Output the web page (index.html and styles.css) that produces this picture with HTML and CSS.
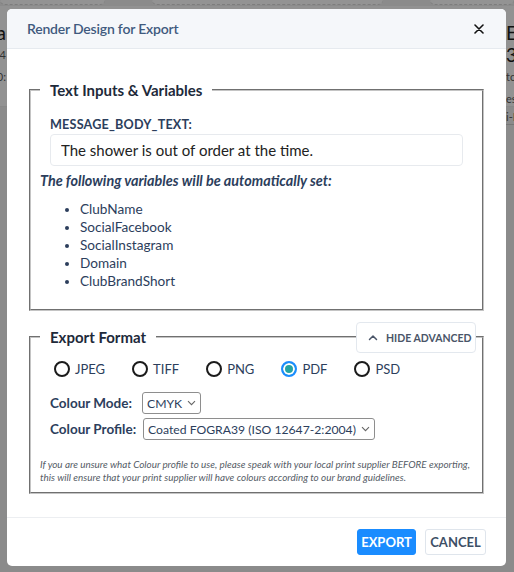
FILE: index.html
```html
<!DOCTYPE html>
<html lang="en">
<head>
<meta charset="utf-8">
<title>Render Design for Export</title>
<link rel="stylesheet" href="styles.css">
</head>
<body>
<div class="page">
  <div class="bg-top">
    <span class="pill p1"></span><span class="pill p2"></span><span class="pill p3"></span>
  </div>
  <div class="bg-cols">
    <div class="bg-col left">
      <div class="bg-title">a</div>
      <div class="bg-line">4</div>
      <div class="bg-line">0:</div>
    </div>
    <div class="bg-col right">
      <div class="bg-title">E</div>
      <div class="bg-sub">3</div>
      <div class="bg-line">to</div>
      <div class="bg-line">es</div>
      <div class="bg-line ruled">i-I</div>
    </div>
  </div>
</div>

<div class="backdrop">
  <div class="modal">
    <div class="modal-header">
      <h1 class="modal-title">Render Design for Export</h1>
      <button class="close" aria-label="Close">
        <svg width="10" height="10" viewBox="0 0 10 10"><path d="M1 1L9 9M9 1L1 9" stroke="#111" stroke-width="1.6" stroke-linecap="round"/></svg>
      </button>
    </div>
    <div class="modal-body">
      <fieldset class="group">
        <legend>Text Inputs &amp; Variables</legend>
        <div class="indent">
          <label class="field-label" for="msg">MESSAGE_BODY_TEXT:</label>
          <input id="msg" class="text-input" type="text" value="The shower is out of order at the time.">
        </div>
        <p class="note-strong">The following variables will be automatically set:</p>
        <ul class="vars">
          <li>ClubName</li>
          <li>SocialFacebook</li>
          <li>SocialInstagram</li>
          <li>Domain</li>
          <li>ClubBrandShort</li>
        </ul>
      </fieldset>

      <fieldset class="group export">
        <legend>Export Format</legend>
        <button class="toggle-adv">
          <svg width="10" height="7" viewBox="0 0 10 7"><path d="M1.5 5.5L5 2L8.5 5.5" fill="none" stroke="#4a5568" stroke-width="1.5" stroke-linecap="round" stroke-linejoin="round"/></svg>
          <span>HIDE ADVANCED</span>
        </button>
        <div class="formats">
          <label class="radio"><input type="radio" name="fmt"><span>JPEG</span></label>
          <label class="radio"><input type="radio" name="fmt"><span>TIFF</span></label>
          <label class="radio"><input type="radio" name="fmt"><span>PNG</span></label>
          <label class="radio"><input type="radio" name="fmt" checked><span>PDF</span></label>
          <label class="radio"><input type="radio" name="fmt"><span>PSD</span></label>
        </div>
        <div class="opt-row first">
          <span class="opt-label">Colour Mode:</span>
          <span class="select">CMYK<svg width="9" height="6" viewBox="0 0 9 6"><path d="M1 1.2L4.5 4.7L8 1.2" fill="none" stroke="#666" stroke-width="1.1"/></svg></span>
        </div>
        <div class="opt-row second">
          <span class="opt-label">Colour Profile:</span>
          <span class="select">Coated FOGRA39 (ISO 12647-2:2004)<svg width="9" height="6" viewBox="0 0 9 6"><path d="M1 1.2L4.5 4.7L8 1.2" fill="none" stroke="#666" stroke-width="1.1"/></svg></span>
        </div>
        <p class="footnote">If you are unsure what Colour profile to use, please speak with your local print supplier BEFORE exporting, this will ensure that your print supplier will have colours according to our brand guidelines.</p>
      </fieldset>
    </div>
    <div class="modal-footer">
      <button class="btn primary">EXPORT</button>
      <button class="btn secondary">CANCEL</button>
    </div>
  </div>
</div>
</body>
</html>
```

FILE: styles.css
```css
* { box-sizing: border-box; }

html, body {
  margin: 0;
  height: 100%;
}

body {
  background: #8b8b8b;
  font-family: Lato, "Liberation Sans", sans-serif;
  overflow: hidden;
}

/* background page (dimmed) */
.page {
  height: 100%;
  overflow: hidden;
}
.bg-top {
  display: flex;
  gap: 47px;
  height: 6px;
}
.pill {
  display: block;
  height: 5px;
  background: #939393;
  border-radius: 0 0 6px 6px;
  border-bottom: 1px dashed #7d7d7d;
}
.p1 { width: 105px; }
.p2 { width: 231px; }
.p3 { width: 84px; }

.bg-cols {
  display: flex;
  justify-content: space-between;
  height: 101px;
  background: #929292;
  border-bottom: 1px solid #888;
}
.bg-col { width: 40px; color: #222; font-size: 11px; }
.bg-col.left { margin-left: -34px; text-align: right; }
.bg-col.right { margin-right: -32px; }
.bg-title { font-size: 19px; line-height: 22px; margin-top: 16px; color: #111; }
.bg-sub { font-size: 19px; line-height: 22px; color: #111; }
.bg-line { line-height: 22px; color: #333; }
.bg-col.left .bg-line:first-of-type { margin-top: 17px; }
.bg-line.ruled { border-bottom: 1px solid #777; line-height: 14px; }

/* modal */
.backdrop {
  position: fixed;
  inset: 0;
  padding: 9px 8px 6px 7px;
  display: flex;
}
.modal {
  width: 499px;
  height: 557px;
  background: #fff;
  border-radius: 5px;
  display: flex;
  flex-direction: column;
  overflow: hidden;
}
.modal-header {
  height: 40px;
  flex: none;
  background: #f5f7fa;
  border-bottom: 1px solid #e6eaef;
  display: flex;
  align-items: center;
  justify-content: space-between;
  padding: 0 22px 0 20px;
}
.modal-title {
  margin: 0;
  font-size: 14px;
  font-weight: 600;
  letter-spacing: -0.2px;
  color: #3f5a7e;
}
.close {
  background: none;
  border: 0;
  padding: 0;
  width: 10px;
  height: 10px;
  display: flex;
  cursor: pointer;
}

.modal-body {
  flex: 1;
  padding: 31px 22px 0;
  display: flex;
  flex-direction: column;
  gap: 16px;
}

.group {
  margin: 0;
  padding: 0 10px;
  border: 2px groove #c4c4c4;
  position: relative;
  min-width: 0;
}
.group legend {
  padding: 0 10px;
  margin-left: -1px;
  font-size: 15px;
  font-weight: 700;
  line-height: 20px;
  color: #1e2a3a;
}
.indent { padding: 0 9px; }

.field-label {
  display: block;
  margin-top: 16px;
  font-size: 12.6px;
  letter-spacing: 0.2px;
  line-height: 18px;
  font-weight: 700;
  color: #2c3e5c;
}
.text-input {
  display: block;
  width: 100%;
  height: 32px;
  margin: 0;
  border: 1px solid #e7eaee;
  border-radius: 4px;
  padding: 0 10px;
  font: 15px Lato, "Liberation Sans", sans-serif;
  color: #222;
  background: #fff;
}
.note-strong {
  margin: 6px 0 0 -1px;
  font-size: 14.4px;
  line-height: 18px;
  font-weight: 700;
  font-style: italic;
  color: #2c3e5c;
}
.vars {
  margin: 10px 0 19px;
  padding-left: 39px;
  font-size: 13.6px;
  line-height: 18px;
  color: #2c3e5c;
}

/* export format */
.export { padding-bottom: 8px; }
.toggle-adv {
  position: absolute;
  top: -25px;
  right: 6px;
  height: 31px;
  width: 120px;
  display: flex;
  align-items: center;
  gap: 8px;
  padding: 0 0 0 11px;
  background: #fff;
  border: 1px solid #e3e8ee;
  border-radius: 4px;
  font: 700 10.5px Lato, "Liberation Sans", sans-serif;
  white-space: nowrap;
  color: #4a5568;
  cursor: pointer;
}
.formats {
  display: flex;
  gap: 27px;
  margin: 13px 0 0 13px;
}
.radio {
  display: flex;
  align-items: center;
  gap: 5px;
  font-size: 13px;
  line-height: 18px;
  color: #2c3e5c;
}
.radio input {
  appearance: none;
  margin: 0;
  width: 16px;
  height: 16px;
  border: 2px solid #1b1b1b;
  border-radius: 50%;
  background: #fff;
}
.radio input:checked {
  border-color: #1a8cff;
  background: #24a3a3;
  box-shadow: inset 0 0 0 2px #fff;
}

.opt-row {
  display: flex;
  align-items: center;
  margin-left: 9px;
  height: 22px;
  margin-top: 4px;
}
.opt-row.first { margin-top: 14px; }
.opt-label {
  font-size: 13.5px;
  font-weight: 700;
  white-space: nowrap;
  color: #2c3e5c;
  width: 92px;
}
.opt-row.second .opt-label { width: 93px; }
.select {
  display: inline-flex;
  align-items: center;
  gap: 5px;
  height: 22px;
  padding: 0 4px 0 4px;
  border: 1px solid #8e8e8e;
  border-radius: 3px;
  font-size: 12.2px;
  white-space: nowrap;
  color: #2c3e5c;
}
.footnote {
  margin: 18px 0 0 -1px;
  font-size: 9.9px;
  line-height: 13px;
  font-style: italic;
  color: #555c66;
}

/* footer */
.modal-footer {
  flex: none;
  height: 49px;
  border-top: 1px solid #eceef1;
  display: flex;
  justify-content: flex-end;
  align-items: center;
  gap: 9px;
  padding: 0 20px;
}
.btn {
  height: 26px;
  border-radius: 3px;
  font: 700 13px Lato, "Liberation Sans", sans-serif;
  padding: 0;
  cursor: pointer;
}
.btn.primary {
  width: 59px;
  background: #1a8cff;
  border: 1px solid #1a8cff;
  color: #fff;
}
.btn.secondary {
  width: 61px;
  background: #fff;
  border: 1px solid #dfe5ec;
  color: #3d4f66;
}
```
